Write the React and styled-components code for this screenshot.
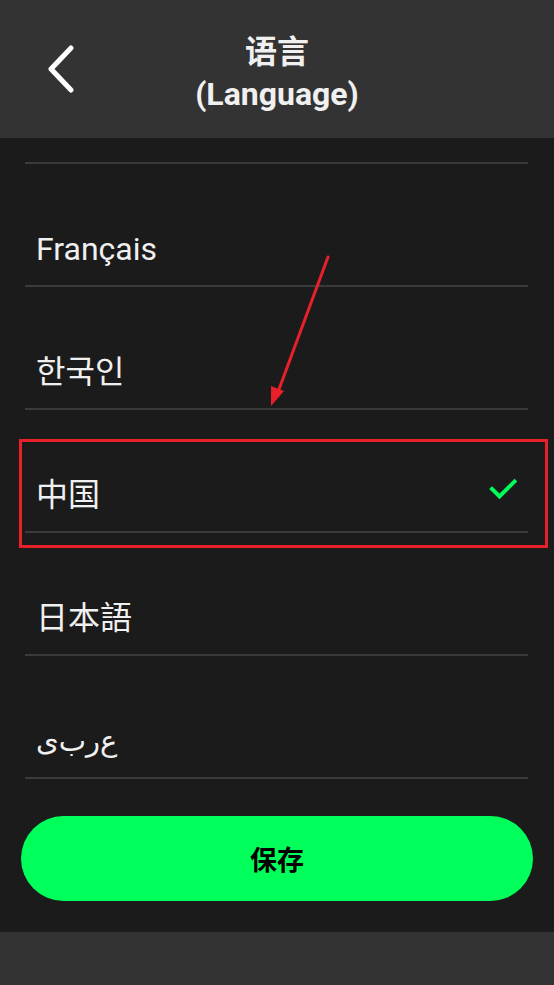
import React from "react";
import styled, { createGlobalStyle } from "styled-components";

const GlobalStyle = createGlobalStyle`
  html, body {
    margin: 0;
    padding: 0;
    background: #1b1b1b;
  }
  body {
    font-family: Roboto, "Noto Sans CJK SC", sans-serif;
  }
`;

const Screen = styled.div`
  position: relative;
  width: 554px;
  height: 985px;
  background: #1b1b1b;
  display: flex;
  flex-direction: column;
  overflow: hidden;
`;

const Header = styled.header`
  height: 138px;
  flex-shrink: 0;
  background: #333333;
  display: grid;
  grid-template-columns: 110px 1fr 110px;
  align-items: center;
`;

const BackButton = styled.button`
  background: none;
  border: 0;
  padding: 0;
  margin-left: 44px;
  width: 36px;
  height: 50px;
  display: flex;
  align-items: center;
  justify-content: center;
  cursor: pointer;
`;

const Title = styled.h1`
  margin: 0;
  text-align: center;
  color: #f0f0f0;
  font-family: Roboto, "Noto Sans CJK SC", sans-serif;
  font-size: 32px;
  font-weight: 700;
  line-height: 42px;
  padding-top: 8px;
`;

const List = styled.ul`
  list-style: none;
  margin: 24px 26px 0 25px;
  padding: 0;
  border-top: 2px solid #3a3a3a;
`;

const Row = styled.li`
  box-sizing: content-box;
  height: 104px;
  padding: 0 11px 17px 11px;
  border-bottom: 2px solid #3a3a3a;
  display: flex;
  align-items: flex-end;
  justify-content: space-between;
  color: #f0f0f0;
  font-family: Roboto, "Noto Sans CJK SC", "Noto Sans CJK KR", "DejaVu Sans", sans-serif;
  font-size: 32px;
  line-height: 38px;
`;

const Label = styled.span`
  font-size: ${(p) => (p.$arabic ? "29px" : "inherit")};
  font-family: ${(p) => (p.$arabic ? '"DejaVu Sans", sans-serif' : "inherit")};
`;

const Check = styled.svg`
  width: 28px;
  height: 23px;
  margin-bottom: 13px;
`;

const SaveButton = styled.button`
  margin: 37px 21px 0 21px;
  height: 85px;
  border: 0;
  border-radius: 43px;
  background: #00ff5a;
  color: #000;
  font-family: "Noto Sans CJK SC", sans-serif;
  font-size: 27px;
  font-weight: 700;
  cursor: pointer;
`;

const BottomBar = styled.div`
  margin-top: auto;
  height: 53px;
  background: #333333;
`;

const Highlight = styled.div`
  position: absolute;
  left: 19px;
  top: 439px;
  width: 523px;
  height: 103px;
  border: 3px solid #e8202a;
  pointer-events: none;
`;

const ArrowOverlay = styled.svg`
  position: absolute;
  left: 0;
  top: 0;
  pointer-events: none;
`;

const languages = [
  { label: "Français" },
  { label: "한국인" },
  { label: "中国" },
  { label: "日本語" },
  { label: "ع\u200Cر\u200Cب\u200Cی", arabic: true },
];
const selected = "中国";

export default function App() {
  return (
    <Screen>
      <GlobalStyle />
      <Header>
        <BackButton aria-label="back">
          <svg width="30" height="48" viewBox="0 0 30 48">
            <path
              d="M24 3 L4 24 L24 45"
              fill="none"
              stroke="#ffffff"
              strokeWidth="5"
              strokeLinecap="round"
              strokeLinejoin="round"
            />
          </svg>
        </BackButton>
        <Title>
          语言
          <br />
          (Language)
        </Title>
        <div />
      </Header>
      <List>
        {languages.map((lang) => (
          <Row key={lang.label}>
            <Label $arabic={lang.arabic}>{lang.label}</Label>
            {lang.label === selected && (
              <Check viewBox="0 0 28 23">
                <path
                  d="M3 11 L10.5 18.5 L25.5 3.5"
                  fill="none"
                  stroke="#00ff5a"
                  strokeWidth="4"
                  strokeLinecap="square"
                />
              </Check>
            )}
          </Row>
        ))}
      </List>
      <SaveButton>保存</SaveButton>
      <BottomBar />
      <Highlight />
      <ArrowOverlay width="554" height="985" viewBox="0 0 554 985">
        <line x1="328" y1="257" x2="278" y2="392" stroke="#e8202a" strokeWidth="3" strokeLinecap="round" />
        <polygon points="271,406 271,386 284,391" fill="#e8202a" />
      </ArrowOverlay>
    </Screen>
  );
}
